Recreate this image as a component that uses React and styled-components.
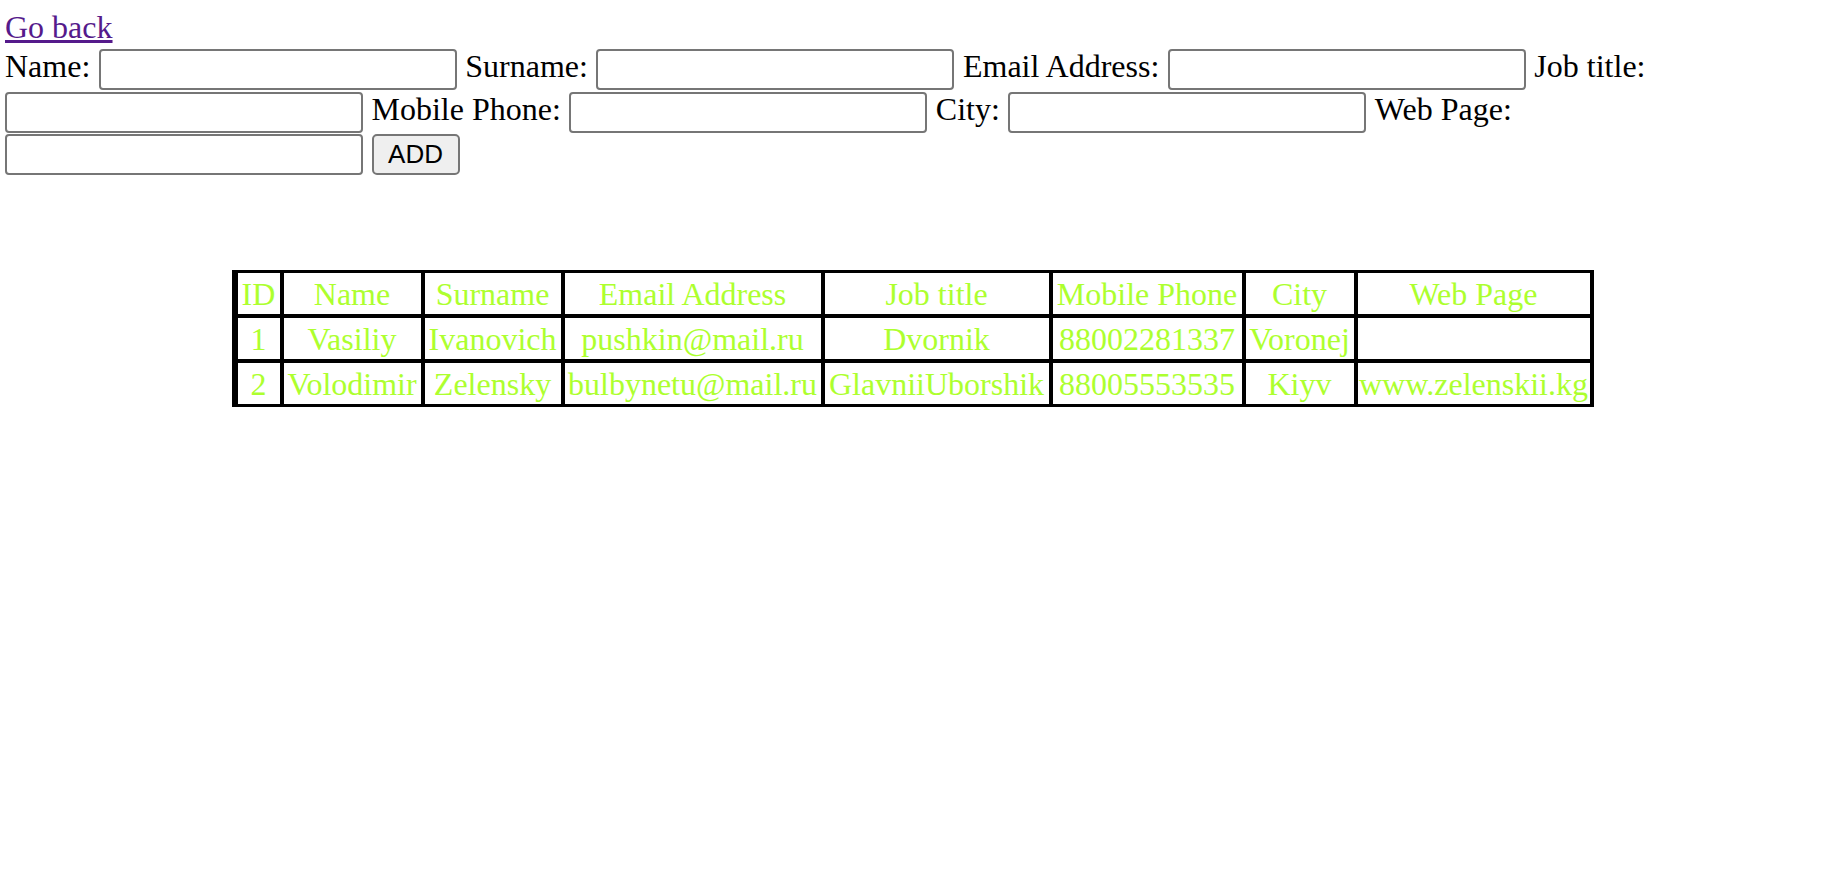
import React from 'react'
import styled, { createGlobalStyle } from 'styled-components'

const GlobalStyle = createGlobalStyle`
  body {
    margin: 0;
    background: #fff;
    font-family: "Liberation Serif", "Times New Roman", serif;
  }
`

const Page = styled.div`
  padding: 9px 8px 0 5px;
  font-size: 32px;
`

const BackLink = styled.a`
  display: block;
  width: max-content;
  color: #551a8b;
  text-decoration: underline;
  line-height: normal;
`

const Form = styled.form`
  display: flex;
  flex-wrap: wrap;
  align-items: flex-start;
  column-gap: 8.5px;
  row-gap: 1.5px;
  margin-top: 3px;
`

const Label = styled.label`
  line-height: 1.1;
  color: #000;
  white-space: nowrap;
`

const Input = styled.input`
  box-sizing: border-box;
  width: 358px;
  height: 41px;
  border: 2px solid #767676;
  border-radius: 4px;
  background: #fff;
  padding: 2px 4px;
  font-size: 26px;
`

const AddButton = styled.button`
  box-sizing: border-box;
  width: 88px;
  height: 41px;
  border: 2px solid #767676;
  border-radius: 5px;
  background: #efefef;
  color: #000;
  font-family: "Liberation Sans", Arial, sans-serif;
  font-size: 26px;
  padding: 0;
`

const Table = styled.table`
  table-layout: fixed;
  width: 1362px;
  margin: 95px 0 0 227px;
  border-collapse: separate;
  border-spacing: 0;
  border-top: 3px solid #000;
  border-bottom: 3px solid #000;
  border-right: 4px solid #000;
`

const Cell = styled.td`
  box-sizing: border-box;
  width: ${p => p.$w}px;
  height: 45px;
  padding: 2px 1px 0 0;
  border-left: ${p => (p.$first ? 6 : 4)}px solid #000;
  border-bottom: 4px solid #000;
  color: greenyellow;
  font-size: 32px;
  font-weight: normal;
  line-height: 39px;
  text-align: center;
  white-space: nowrap;
  overflow: hidden;

  tr:last-child > & {
    height: 40px;
    border-bottom: 0;
  }
`

const fields = ['Name', 'Surname', 'Email Address', 'Job title', 'Mobile Phone', 'City', 'Web Page']

const columns = [
  { title: 'ID', w: 48 },
  { title: 'Name', w: 141 },
  { title: 'Surname', w: 140 },
  { title: 'Email Address', w: 260 },
  { title: 'Job title', w: 228 },
  { title: 'Mobile Phone', w: 193 },
  { title: 'City', w: 112 },
  { title: 'Web Page', w: 236 }
]

const people = [
  ['1', 'Vasiliy', 'Ivanovich', 'pushkin@mail.ru', 'Dvornik', '88002281337', 'Voronej', ''],
  ['2', 'Volodimir', 'Zelensky', 'bulbynetu@mail.ru', 'GlavniiUborshik', '88005553535', 'Kiyv', 'www.zelenskii.kg']
]

export default function App() {
  return (
    <Page>
      <GlobalStyle />
      <BackLink href="#">Go back</BackLink>
      <Form onSubmit={e => e.preventDefault()}>
        {fields.map(f => (
          <React.Fragment key={f}>
            <Label>{f}:</Label>
            <Input type="text" />
          </React.Fragment>
        ))}
        <AddButton type="submit">ADD</AddButton>
      </Form>
      <Table>
        <tbody>
          <tr>
            {columns.map((c, i) => (
              <Cell as="th" key={c.title} $w={c.w} $first={i === 0}>
                {c.title}
              </Cell>
            ))}
          </tr>
          {people.map(row => (
            <tr key={row[0]}>
              {row.map((v, i) => (
                <Cell key={i} $w={columns[i].w} $first={i === 0}>{v}</Cell>
              ))}
            </tr>
          ))}
        </tbody>
      </Table>
    </Page>
  )
}
